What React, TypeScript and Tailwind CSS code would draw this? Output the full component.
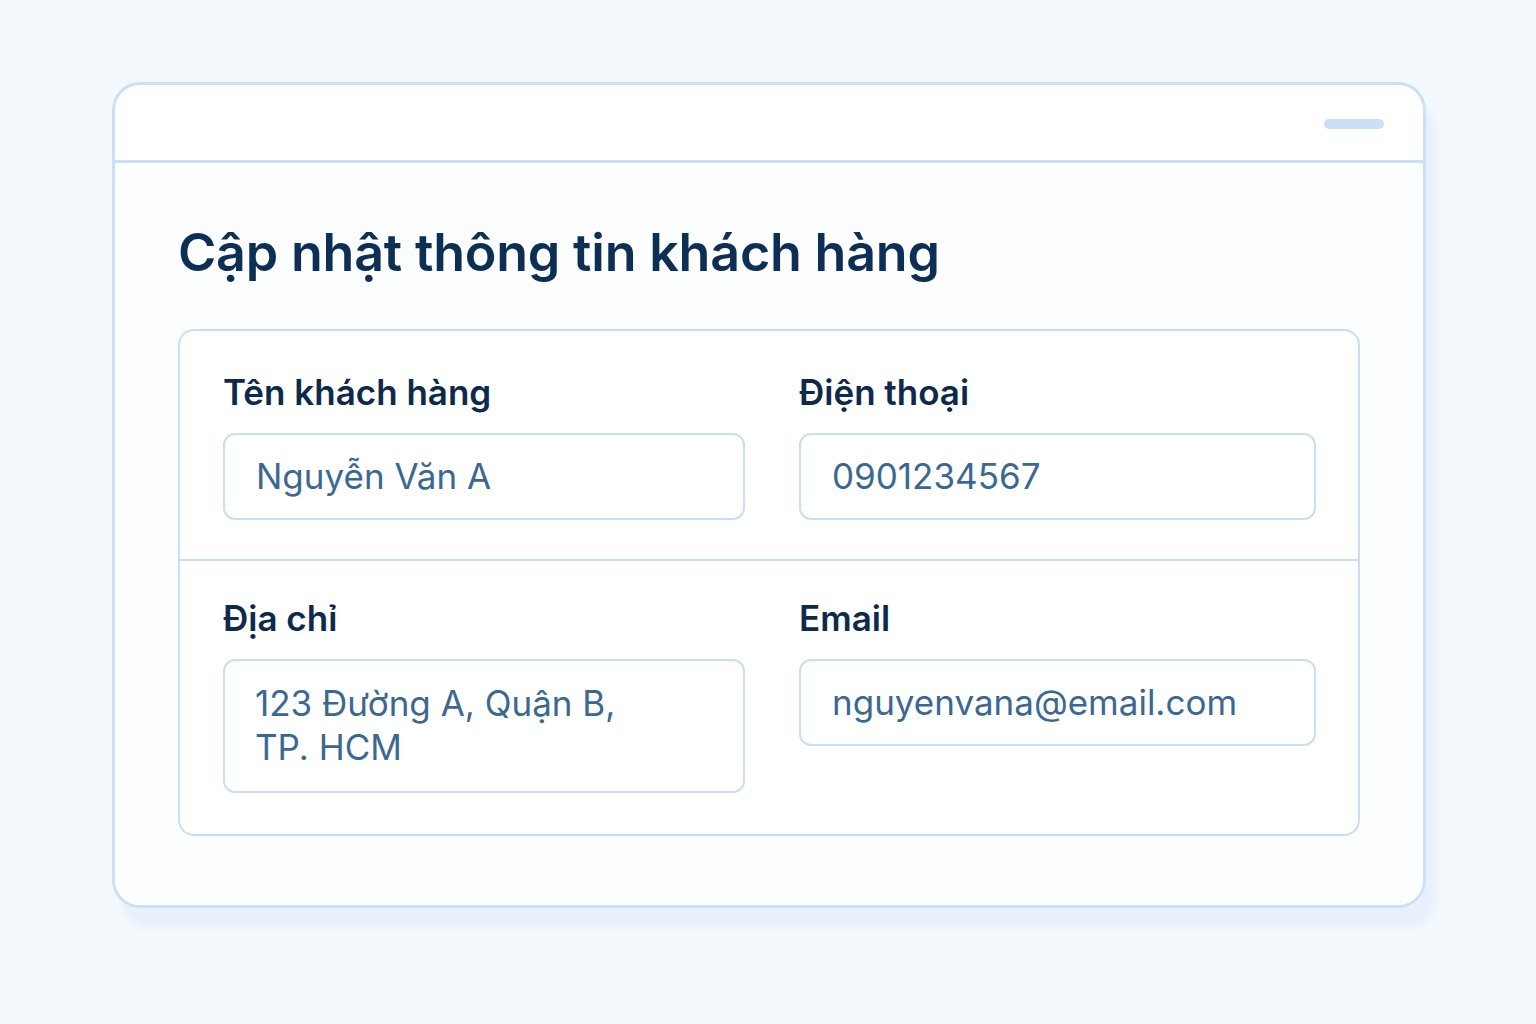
export default function App() {
  return (
    <div className="min-h-screen bg-[#f3f9fd] pt-[82px] pl-[112px] font-['Inter','Noto_Sans',sans-serif]">
      <div className="w-[1314px] h-[826px] rounded-[28px] border-[3px] border-[#cbe0f6] bg-white shadow-[10px_20px_6px_#e8f1fb] overflow-hidden flex flex-col">
        {/* Window header */}
        <div className="h-[78px] border-b-[3px] border-[#cbe0f6] flex items-center justify-end pr-[39px] pt-[3px]">
          <div className="w-[60px] h-[10px] rounded-full bg-[#cbe0f6]" />
        </div>

        {/* Body */}
        <div className="flex-1 bg-[#fcfdff] px-[63px] pt-[64px]">
          <h1 className="text-[52px] leading-none font-semibold text-[#0d2f56] tracking-[-0.2px]">
            Cập nhật thông tin khách hàng
          </h1>

          <div className="mt-[50px] w-[1182px] rounded-[16px] border-2 border-[#c8def5] bg-white">
            <div className="grid grid-cols-[522px_517px] gap-x-[54px] px-[43px] pt-[44px] pb-[39px] border-b-2 border-[#c8def5]">
              <Field label="Tên khách hàng" value="Nguyễn Văn A" />
              <Field label="Điện thoại" value="0901234567" />
            </div>
            <div className="grid grid-cols-[522px_517px] gap-x-[54px] px-[43px] pt-[40px] pb-[41px] items-start">
              <div>
                <Label text="Địa chỉ" />
                <div className="mt-[23px] h-[134px] rounded-[12px] border-2 border-[#c8def5] bg-white pl-[30px] pt-[20px] text-[35px] leading-[44px] text-[#3b6891]">
                  123 Đường A, Quận B,
                  <br />
                  TP. HCM
                </div>
              </div>
              <Field label="Email" value="nguyenvana@email.com" />
            </div>
          </div>
        </div>
      </div>
    </div>
  );
}

function Label({ text }: { text: string }) {
  return (
    <div className="text-[35px] leading-none font-semibold text-[#0d2a4d]">
      {text}
    </div>
  );
}

function Field({ label, value }: { label: string; value: string }) {
  return (
    <div>
      <Label text={label} />
      <div className="mt-[23px] h-[87px] rounded-[12px] border-2 border-[#c8def5] bg-white pl-[31px] flex items-center text-[35px] leading-none text-[#3b6891]">
        {value}
      </div>
    </div>
  );
}
